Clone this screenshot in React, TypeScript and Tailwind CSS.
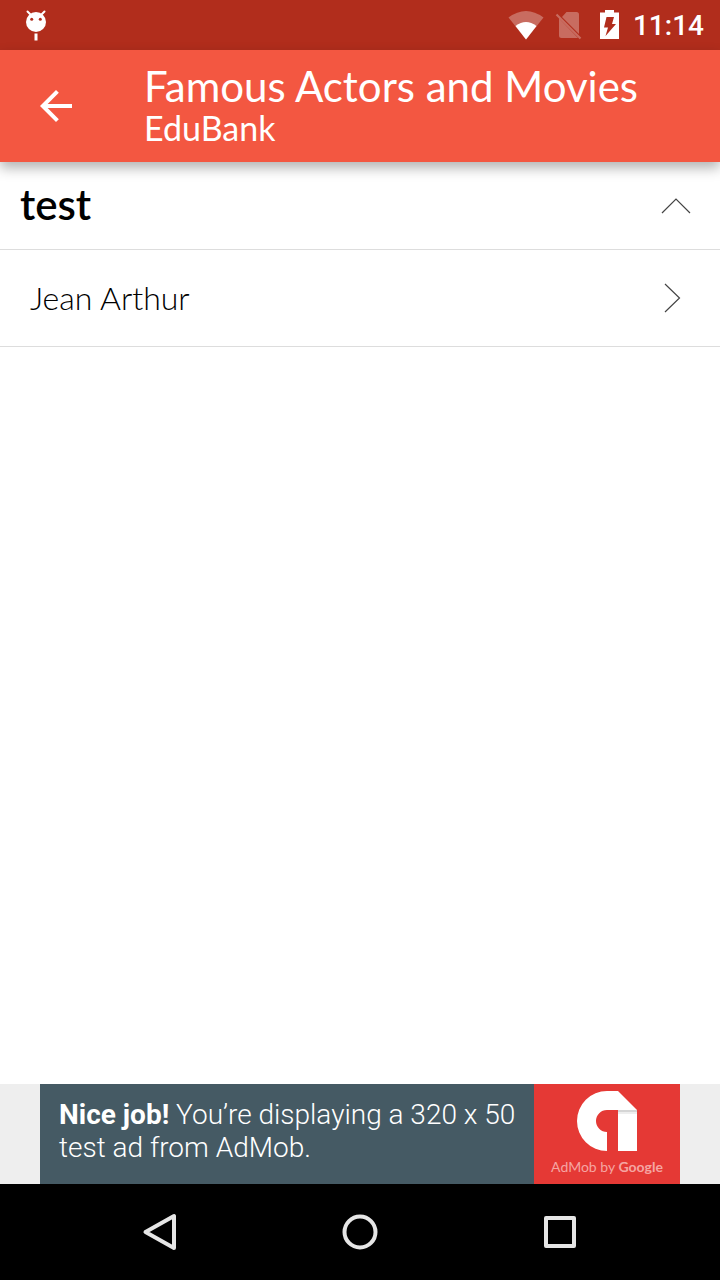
import { useState } from "react";

function StatusBar() {
  return (
    <div className="flex h-[50px] shrink-0 items-center justify-between bg-[#b12d1c] pr-4 pl-6">
      <svg width="24" height="50" viewBox="0 0 24 50" aria-hidden="true">
        <path
          d="M3.5 11.5 L8 16 M20.500 11.500 L16 16"
          stroke="#fff"
          strokeWidth="2"
          strokeLinecap="round"
        />
        <circle cx="12" cy="22" r="10" fill="#fff" />
        <circle cx="7.700" cy="19.300" r="1.500" fill="#b12d1c" />
        <circle cx="16.300" cy="19.300" r="1.500" fill="#b12d1c" />
        <rect x="10.500" y="33.500" width="3" height="7" fill="#fff" />
      </svg>
      <div className="flex items-center">
        <svg width="125" height="50" viewBox="508 0 125 50" aria-hidden="true">
          <path d="M508.500 17.500 Q526 4.500 543.500 17.500 L526 39.500 Z" fill="#fff" fillOpacity="0.3" />
          <path d="M515.500 26 Q526 18 536.500 26 L526 39.500 Z" fill="#fff" />
          <path
            d="M566.500 12 H576.500 Q579 12 579 14.500 V34 L562 17 Z M559 18.500 L578 38 H561.500 Q559 38 559 35.500 Z"
            fill="#fff"
            fillOpacity="0.3"
          />
          <path d="M556.500 14.500 L580.500 38.500" stroke="#fff" strokeOpacity="0.3" strokeWidth="2.200" />
          <path d="M605 10 H614 V12.500 H619 V39 H600 V12.500 H605 Z" fill="#fff" />
          <path d="M606.500 17 H614 L612 24 H616 L605.500 36 L608 27.500 H604 Z" fill="#b12d1c" />
        </svg>
        <time className="pt-0.5 font-['Roboto',sans-serif] text-[28px] leading-[48px] font-medium text-white">
          11:14
        </time>
      </div>
    </div>
  );
}

function AppBar() {
  return (
    <header className="relative flex h-28 shrink-0 items-center bg-[#f35741] pl-8 text-white shadow-[0_6px_12px_rgba(0,0,0,0.3)]">
      <button type="button" aria-label="Back" className="flex size-12 items-center justify-center">
        <svg width="32" height="32" viewBox="4 4 16 16" fill="#fff" aria-hidden="true">
          <path d="M20 11H7.830l5.590-5.590L12 4l-8 8 8 8 1.410-1.410L7.830 13H20v-2z" />
        </svg>
      </button>
      <div className="ml-16 pb-0.5">
        <h1 className="text-[42px] leading-[46px] whitespace-nowrap">Famous Actors and Movies</h1>
        <p className="text-[34px] leading-[38px]">EduBank</p>
      </div>
    </header>
  );
}

function AdBanner() {
  return (
    <aside className="mt-auto flex h-[100px] shrink-0 bg-[#eeeeee] px-10 font-['Roboto',sans-serif]">
      <a href="#admob" className="flex flex-1">
        <p className="flex-1 bg-[#455a64] pt-[14px] pl-[19px] text-[28px] leading-[33px] font-light whitespace-nowrap text-white">
          <strong className="font-bold">Nice job!</strong> You’re displaying a 320 x 50
          <br />
          test ad from AdMob.
        </p>
        <div className="flex w-[146px] flex-col items-center bg-[#e53935] pt-[7px]">
          <svg width="60" height="60" viewBox="0 0 60 60" aria-hidden="true">
            <path d="M41 0 H30 A30 30 0 0 0 30 60 V41 A11 11 0 0 1 30 19 H41 V60 H60 V19 Z" fill="#fff" />
            <path d="M41 19 H60 V21 H41 Z" fill="#d5d5d5" />
            <path d="M41 21 H60 V23 H41 Z" fill="#eeeeee" />
          </svg>
          <span className="pt-1.5 font-['Lato',sans-serif] text-[14px] leading-5 whitespace-nowrap text-[#f5a5a2]">
            AdMob by <b className="font-bold">Google</b>
          </span>
        </div>
      </a>
    </aside>
  );
}

function NavigationBar() {
  const button = "flex h-24 w-[200px] items-center justify-center";
  return (
    <nav className="flex shrink-0 justify-center bg-black">
      <button type="button" aria-label="Back" className={button}>
        <svg width="40" height="40" viewBox="0 0 40 40" fill="none" stroke="#e6e6e6" strokeWidth="4" strokeLinejoin="round" aria-hidden="true">
          <path d="M34 4 V36 L5.500 20 Z" />
        </svg>
      </button>
      <button type="button" aria-label="Home" className={button}>
        <svg width="40" height="40" viewBox="0 0 40 40" fill="none" stroke="#e6e6e6" strokeWidth="4" aria-hidden="true">
          <circle cx="20" cy="20" r="15.500" />
        </svg>
      </button>
      <button type="button" aria-label="Recent apps" className={button}>
        <svg width="40" height="40" viewBox="0 0 40 40" fill="none" stroke="#e6e6e6" strokeWidth="4" strokeLinejoin="round" aria-hidden="true">
          <rect x="6" y="6" width="28" height="28" />
        </svg>
      </button>
    </nav>
  );
}

export default function App() {
  const [open, setOpen] = useState(true);
  return (
    <div className="flex min-h-screen flex-col bg-white font-['Lato',sans-serif] text-black">
      <StatusBar />
      <AppBar />
      <main>
        <button
          type="button"
          aria-expanded={open}
          onClick={() => setOpen(!open)}
          className="flex h-[88px] w-full items-center justify-between border-b border-[#dddddd] pr-[29px] pl-5 text-left"
        >
          <span className="pb-1 text-[42px] leading-[48px] font-semibold">test</span>
          <svg width="30" height="16" viewBox="0 0 30 16" fill="none" stroke="#444" strokeWidth="1.200" aria-hidden="true">
            <path d="M1 15 L15 1 L29 15" />
          </svg>
        </button>
        {open && (
          <a href="#jean-arthur" className="flex h-[97px] items-center justify-between border-b border-[#dddddd] pr-[39px] pl-[30px]">
            <span className="text-[32px] leading-9 font-light">Jean Arthur</span>
            <svg width="17" height="30" viewBox="0 0 17 30" fill="none" stroke="#444" strokeWidth="1.200" aria-hidden="true">
              <path d="M1 1 L15.500 15 L1 29" />
            </svg>
          </a>
        )}
      </main>
      <AdBanner />
      <NavigationBar />
    </div>
  );
}
